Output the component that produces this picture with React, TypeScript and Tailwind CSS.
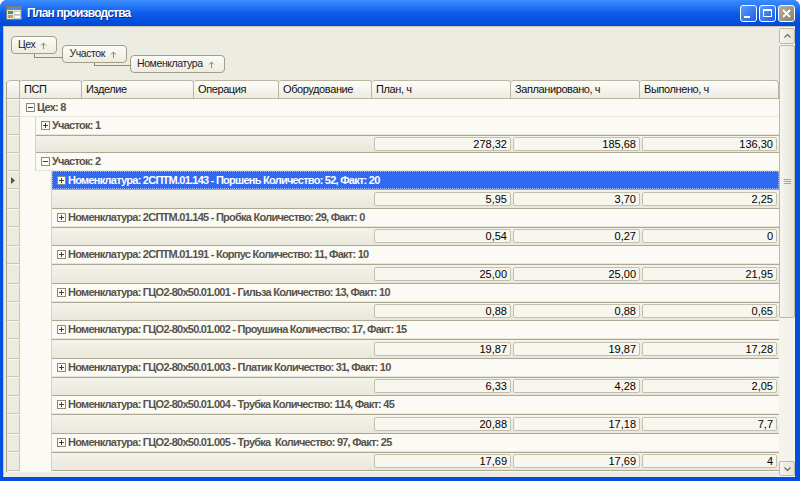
import React from "react";

type Item = { name: string; qty: number; fact: number; v: string[] };

const items: Item[] = [
  { name: "2СПТМ.01.143 - Поршень", qty: 52, fact: 20, v: ["5,95", "3,70", "2,25"] },
  { name: "2СПТМ.01.145 - Пробка", qty: 29, fact: 0, v: ["0,54", "0,27", "0"] },
  { name: "2СПТМ.01.191 - Корпус", qty: 11, fact: 10, v: ["25,00", "25,00", "21,95"] },
  { name: "ГЦО2-80х50.01.001 - Гильза", qty: 13, fact: 10, v: ["0,88", "0,88", "0,65"] },
  { name: "ГЦО2-80х50.01.002 - Проушина", qty: 17, fact: 15, v: ["19,87", "19,87", "17,28"] },
  { name: "ГЦО2-80х50.01.003 - Платик", qty: 31, fact: 10, v: ["6,33", "4,28", "2,05"] },
  { name: "ГЦО2-80х50.01.004 - Трубка", qty: 114, fact: 45, v: ["20,88", "17,18", "7,7"] },
  { name: "ГЦО2-80х50.01.005 - Трубка ", qty: 97, fact: 25, v: ["17,69", "17,69", "4"] },
];

const columns = [
  { title: "ПСП", cls: "w-[62px]" },
  { title: "Изделие", cls: "w-[112px]" },
  { title: "Операция", cls: "w-[85px]" },
  { title: "Оборудование", cls: "w-[93px]" },
  { title: "План, ч", cls: "w-[139px]" },
  { title: "Запланировано, ч", cls: "w-[129px]" },
  { title: "Выполнено, ч", cls: "w-[139px] rounded-tr-[4px]" },
];

function FormIcon() {
  return (
    <svg width="16" height="16" viewBox="0 0 16 16" shapeRendering="crispEdges">
      <rect x="0.5" y="1.5" width="15" height="13" fill="#E8E6DA" stroke="#7A7A7A" />
      <rect x="1" y="2" width="14" height="3" fill="#5E88C8" />
      <rect x="2" y="6" width="5" height="3" fill="#4E9A4E" />
      <rect x="8" y="6" width="6" height="3" fill="#FFFFFF" stroke="#9A9A9A" strokeWidth="0.5" />
      <rect x="2" y="10" width="5" height="3" fill="#C8A04A" />
      <rect x="8" y="10" width="6" height="3" fill="#FFFFFF" stroke="#9A9A9A" strokeWidth="0.5" />
    </svg>
  );
}

function TitleBar() {
  return (
    <div className="h-[26px] shrink-0 flex items-center pl-[6px] pr-[5px] rounded-t-[7px] bg-gradient-to-b from-[#3D8EFF] via-[#0B5DEA] to-[#0049D6]">
      <FormIcon />
      <span className="ml-[5px] text-white font-bold text-[12px] tracking-[-0.8px] [text-shadow:1px_1px_0_#0B2A8C]">
        План производства
      </span>
      <div className="ml-auto flex gap-[2px]">
        <div className="w-[17px] h-[17px] rounded-[3px] border border-white bg-gradient-to-br from-[#5B9BFF] to-[#1D5EE6] flex items-end pl-[3px] pb-[3px]">
          <div className="w-[6px] h-[2px] bg-white" />
        </div>
        <div className="w-[17px] h-[17px] rounded-[3px] border border-white bg-gradient-to-br from-[#5B9BFF] to-[#1D5EE6] flex items-center justify-center">
          <div className="w-[9px] h-[8px] border border-white border-t-[2px]" />
        </div>
        <div className="w-[17px] h-[17px] rounded-[3px] border border-white bg-gradient-to-br from-[#B8B09F] to-[#8A816E] flex items-center justify-center">
          <svg width="9" height="9" viewBox="0 0 9 9">
            <path d="M1 1L8 8M8 1L1 8" stroke="#fff" strokeWidth="1.8" />
          </svg>
        </div>
      </div>
    </div>
  );
}

function Chip({ label, children }: { label: string; children?: React.ReactNode }) {
  return (
    <div className="relative h-[18px] shrink-0 rounded-[4px] border border-[#A39E89] bg-gradient-to-b from-[#FCFCF8] to-[#EEECE1] flex items-center pl-[6px] pr-[9px] gap-[5px] text-[10.5px] tracking-[-0.4px] text-[#222]">
      {children}
      <span>{label}</span>
      <svg width="7" height="7" viewBox="0 0 7 7">
        <path d="M3.5 7V1M1 3.5L3.5 1L6 3.5" stroke="#8A8678" strokeWidth="1" fill="none" />
      </svg>
    </div>
  );
}

function GroupPanel() {
  return (
    <div className="h-[53px] shrink-0 flex items-start pl-[5px]">
      <div className="mt-[9px]">
        <Chip label="Цех" />
      </div>
      <div className="mt-[18px] ml-[5px]">
        <Chip label="Участок">
          <div className="absolute left-[-29px] top-[8px] w-[29px] h-[4px] border-l border-b border-[#8F8B7A]" />
        </Chip>
      </div>
      <div className="mt-[28px] ml-[3px]">
        <Chip label="Номенклатура">
          <div className="absolute left-[-37px] top-[7px] w-[37px] h-[3px] border-l border-b border-[#8F8B7A]" />
        </Chip>
      </div>
    </div>
  );
}

function Sel({ active }: { active?: boolean }) {
  return (
    <div className="w-[13px] shrink-0 bg-[#ECEBE0] border-r border-b border-[#C8C5B4] border-t border-t-[#F8F7F1] flex items-center justify-center">
      {active && (
        <svg width="4" height="7" viewBox="0 0 4 7">
          <path d="M0 0L4 3.5L0 7Z" fill="#555048" />
        </svg>
      )}
    </div>
  );
}

function Indent({ level }: { level: number }) {
  if (level === 1) return <div className="w-[16px] shrink-0 border-r border-[#D8D5C7]" />;
  if (level === 2) return <div className="w-[32px] shrink-0 border-r border-[#D8D5C7]" />;
  return null;
}

function Toggle({ open }: { open: boolean }) {
  return (
    <span className="w-[9px] h-[9px] shrink-0 border border-[#8F8B7C] bg-[#FCFCF9] flex items-center justify-center">
      <svg width="5" height="5" viewBox="0 0 5 5" shapeRendering="crispEdges">
        <path d={open ? "M0 2.5H5" : "M0 2.5H5M2.5 0V5"} stroke="#404040" strokeWidth="1" />
      </svg>
    </span>
  );
}

function GroupRow({
  level,
  open,
  label,
  selected,
}: {
  level: number;
  open: boolean;
  label: string;
  selected?: boolean;
}) {
  return (
    <div className="flex h-[18px] shrink-0">
      <Sel active={selected} />
      <Indent level={level} />
      <div
        className={
          selected
            ? "flex-1 min-w-0 flex items-center gap-[2px] bg-[#316AF0] border border-dotted border-[#9DB8F5] pl-[4px]"
            : level === 0
            ? "flex-1 min-w-0 flex items-center gap-[2px] border-b border-[#E7E5D9] pl-[6px]"
            : "flex-1 min-w-0 flex items-center gap-[2px] border-b border-[#E7E5D9] pl-[5px]"
        }
      >
        <Toggle open={open} />
        <span
          className={
            selected
              ? "font-bold text-white whitespace-pre tracking-[-0.75px]"
              : "font-bold text-[#58534A] whitespace-pre tracking-[-0.75px]"
          }
        >
          {label}
        </span>
      </div>
    </div>
  );
}

function SumRow({ level, v, tall }: { level: number; v: string[]; tall?: boolean }) {
  return (
    <div className={tall ? "flex h-[19.5px] shrink-0" : "flex h-[18px] shrink-0"}>
      <Sel />
      <Indent level={level} />
      <div className="flex-1 min-w-0 flex items-center justify-end gap-[2px] pr-[2px] bg-gradient-to-b from-[#F4F3EA] to-[#EAE8DC] border-t border-b border-[#ACA893]">
        <div className="w-[137px] h-[14px] rounded-[2px] border border-[#C4C0AD] bg-[#F7F6EF] flex items-center justify-end pr-[3px]">
          {v[0]}
        </div>
        <div className="w-[127px] h-[14px] rounded-[2px] border border-[#C4C0AD] bg-[#F7F6EF] flex items-center justify-end pr-[3px]">
          {v[1]}
        </div>
        <div className="w-[135px] h-[14px] rounded-[2px] border border-[#C4C0AD] bg-[#F7F6EF] flex items-center justify-end pr-[3px]">
          {v[2]}
        </div>
      </div>
    </div>
  );
}

function Grid() {
  return (
    <div className="flex-1 min-h-0 flex flex-col border-l border-[#A8A490] rounded-tl-[4px] overflow-hidden bg-[#FBFAF5]">
      <div className="h-[19px] shrink-0 flex bg-[#ECEBE0]">
        <div className="w-[13px] shrink-0 border-t border-r border-b border-[#B9B5A2] rounded-tl-[4px] bg-gradient-to-b from-[#FBFBF6] to-[#ECEAE0]" />
        {columns.map((c) => (
          <div
            key={c.title}
            className={`${c.cls} shrink-0 h-full border-t border-r border-b border-[#B9B5A2] rounded-t-[3px] bg-gradient-to-b from-[#FDFDF9] to-[#EDEBE1] flex items-center pl-[4px] text-[#111] whitespace-nowrap tracking-[-0.4px]`}
          >
            {c.title}
          </div>
        ))}
      </div>
      <div className="flex-1 min-h-0 flex flex-col overflow-hidden">
        <GroupRow level={0} open label="Цех: 8" />
        <GroupRow level={1} open={false} label="Участок: 1" />
        <SumRow level={1} v={["278,32", "185,68", "136,30"]} />
        <GroupRow level={1} open label="Участок: 2" />
        {items.map((it, i) => (
          <React.Fragment key={i}>
            <GroupRow
              level={2}
              open={false}
              selected={i === 0}
              label={`Номенклатура: ${it.name} Количество: ${it.qty}, Факт: ${it.fact}`}
            />
            <SumRow level={2} v={it.v} tall />
          </React.Fragment>
        ))}
      </div>
    </div>
  );
}

function ScrollBtn({ down }: { down?: boolean }) {
  return (
    <div
      className={
        down
          ? "h-[15px] shrink-0 rounded-[2px] border border-[#BDB9A6] bg-gradient-to-r from-[#F7F6F0] to-[#E6E4D6] flex items-center justify-center"
          : "h-[16px] shrink-0 rounded-[2px] border border-[#BDB9A6] bg-gradient-to-r from-[#F7F6F0] to-[#E6E4D6] flex items-center justify-center"
      }
    >
      <svg width="7" height="4" viewBox="0 0 7 4">
        <path d={down ? "M0.5 0.5L3.5 3.5L6.5 0.5" : "M0.5 3.5L3.5 0.5L6.5 3.5"} stroke="#6E6A5C" strokeWidth="1.2" fill="none" />
      </svg>
    </div>
  );
}

function ScrollBar() {
  return (
    <div className="w-[16px] shrink-0 flex flex-col bg-[#F4F3EC] pt-[1px] pb-[1px]">
      <ScrollBtn />
      <div className="flex-1 flex flex-col pt-[1px]">
        <div className="h-[273px] rounded-[2px] border border-[#BDB9A6] bg-gradient-to-r from-[#F6F5EF] to-[#E8E6D9] flex flex-col items-center justify-center gap-[1px]">
          <div className="w-[7px] h-[1px] bg-[#A9A594]" />
          <div className="w-[7px] h-[1px] bg-[#A9A594]" />
          <div className="w-[7px] h-[1px] bg-[#A9A594]" />
        </div>
      </div>
      <ScrollBtn down />
    </div>
  );
}

export default function App() {
  return (
    <div className="w-[800px] h-[481px] flex flex-col bg-[#0050E0] rounded-t-[7px] overflow-hidden font-['Liberation_Sans',Arial,sans-serif] text-[11px] text-black">
      <TitleBar />
      <div className="flex-1 min-h-0 flex pl-[3px] pr-[5px] pb-[4px]">
        <div className="flex-1 min-h-0 flex bg-[#EDECE2] border-l border-t border-[#C9C6B5]">
          <div className="flex-1 min-w-0 flex flex-col pl-[2px] pb-[5px]">
            <GroupPanel />
            <Grid />
          </div>
          <ScrollBar />
        </div>
      </div>
    </div>
  );
}
